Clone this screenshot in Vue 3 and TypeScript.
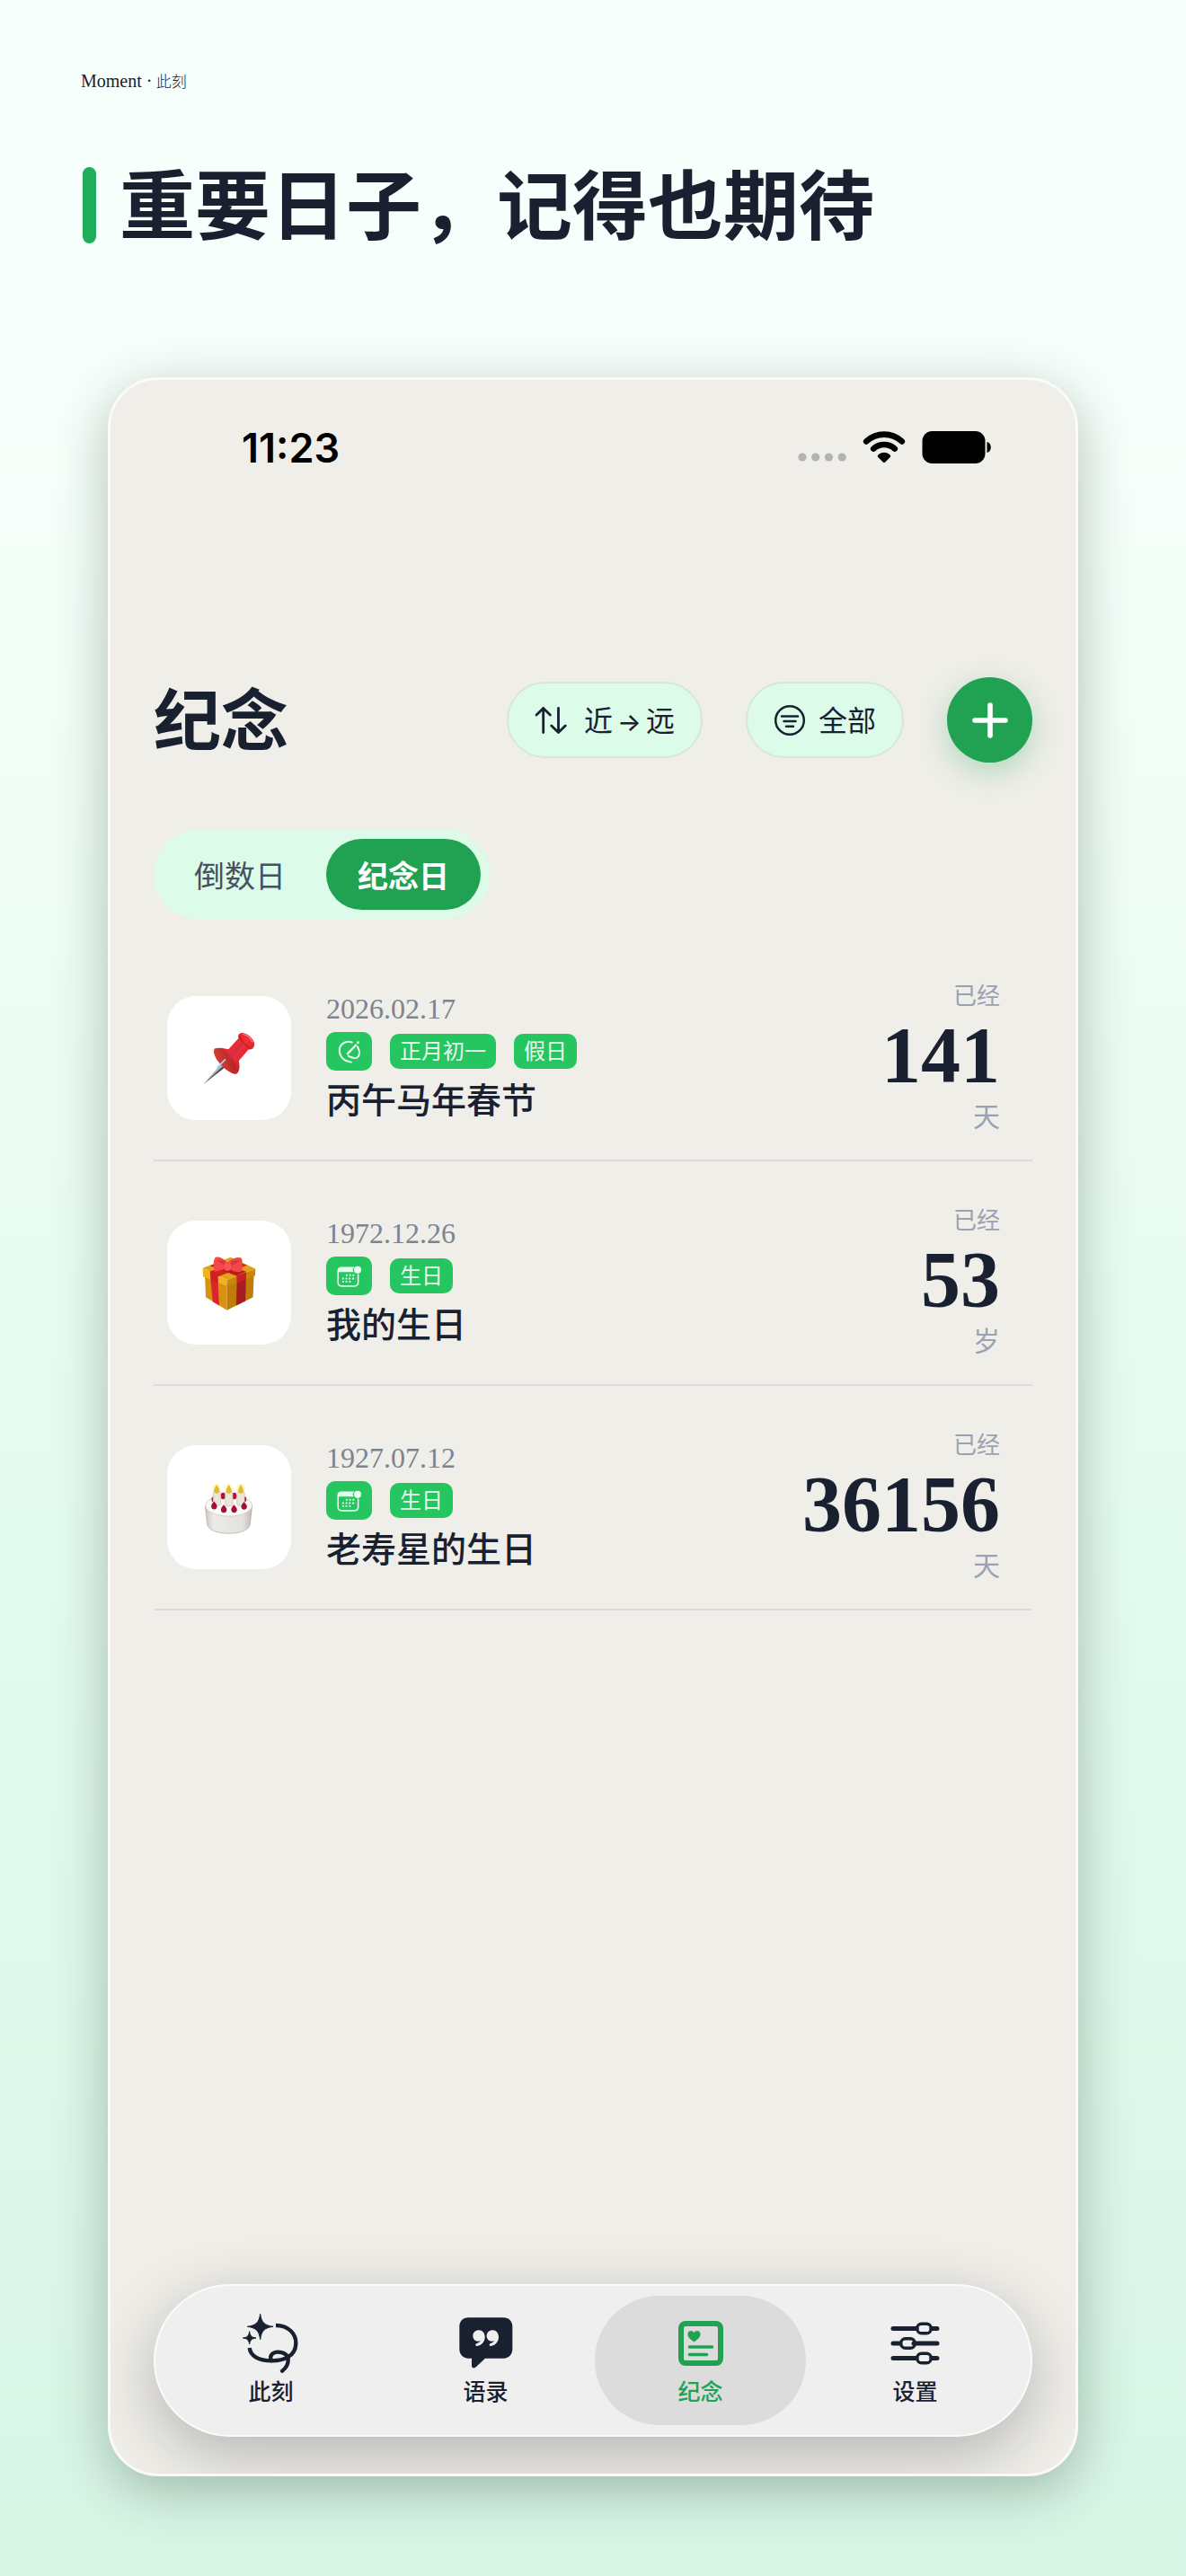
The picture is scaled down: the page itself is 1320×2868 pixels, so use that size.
<script setup lang="ts">
import { ref } from 'vue'

type Kind = 'lunar' | 'solar'
type Emoji = 'pin' | 'gift' | 'cake'
interface Anniversary {
  emoji: Emoji
  date: string
  kind: Kind
  tags: string[]
  title: string
  value: number
  unit: string
}

const items: Anniversary[] = [
  { emoji: 'pin', date: '2026.02.17', kind: 'lunar', tags: ['正月初一', '假日'], title: '丙午马年春节', value: 141, unit: '天' },
  { emoji: 'gift', date: '1972.12.26', kind: 'solar', tags: ['生日'], title: '我的生日', value: 53, unit: '岁' },
  { emoji: 'cake', date: '1927.07.12', kind: 'solar', tags: ['生日'], title: '老寿星的生日', value: 36156, unit: '天' },
]

const segments = ['倒数日', '纪念日']
const activeSegment = ref('纪念日')

const tabs = ['此刻', '语录', '纪念', '设置']
const activeTab = ref('纪念')
</script>

<template>
  <div class="page">
    <header class="intro">
      <p class="brand"><span class="brand-latin">Moment ·</span> 此刻</p>
      <h1 class="headline">重要日子，记得也期待</h1>
    </header>

    <main class="phone">
      <div class="status">
        <span class="time">11:23</span>
        <div class="status-icons">
          <svg class="signal" viewBox="0 0 54 38" aria-hidden="true">
            <g fill="#b3b2ae"><circle cx="5" cy="30" r="4.6" /><circle cx="19.700" cy="30" r="4.6" /><circle cx="34.400" cy="30" r="4.6" /><circle cx="49.200" cy="30" r="4.6" /></g>
          </svg>
          <svg class="wifi" viewBox="0 0 48 38" aria-hidden="true">
            <g fill="none" stroke="#000" stroke-width="6.600" stroke-linecap="round">
              <path d="M4.200 12.400a29 29 0 0 1 39.600 0" />
              <path d="M12.200 20.600a17.500 17.500 0 0 1 23.600 0" />
            </g>
            <path d="M17.400 27.400c3.600-3.600 9.600-3.600 13.200 0 .9.900.9 1.700.1 2.500l-5.500 5.500c-.8.800-1.600.8-2.400 0l-5.500-5.500c-.8-.8-.8-1.600.1-2.500z" />
          </svg>
          <svg class="battery" viewBox="0 0 78 38" aria-hidden="true">
            <rect x="0.500" y="1" width="70" height="36" rx="11" />
            <path d="M72.500 13c2.700.6 4.300 3 4.300 6s-1.600 5.400-4.300 6z" />
          </svg>
        </div>
      </div>

      <div class="toolbar">
        <h2 class="title">纪念</h2>
        <button class="pill" type="button">
          <svg class="sort-icon" viewBox="0 0 36 36" aria-hidden="true">
            <g fill="none" stroke="#192130" stroke-width="2.800" stroke-linecap="round" stroke-linejoin="round">
              <path d="M9.700 31.500V4.500M2 12l7.700-7.500L17.400 12" />
              <path d="M26.500 4.500v27M18.800 24l7.700 7.500 7.700-7.500" />
            </g>
          </svg>
          <span class="pill-text">近<span class="arrow">→</span>远</span>
        </button>
        <button class="pill pill-filter" type="button">
          <svg class="filter-icon" viewBox="0 0 36 36" aria-hidden="true">
            <g fill="none" stroke="#192130" stroke-width="2.500" stroke-linecap="round">
              <circle cx="18" cy="18" r="15.800" />
              <path d="M9 13.500h18M11.500 19h13M14 24.700h8" />
            </g>
          </svg>
          <span class="pill-text">全部</span>
        </button>
        <button class="add" type="button" aria-label="添加">
          <svg viewBox="0 0 40 40" aria-hidden="true">
            <path d="M20 3v34M3 20h34" stroke="#fff" stroke-width="5.600" stroke-linecap="round" />
          </svg>
        </button>
      </div>

      <div class="segmented">
        <button
          v-for="name in segments"
          :key="name"
          type="button"
          :class="['segment', { active: name === activeSegment }]"
          @click="activeSegment = name"
        >{{ name }}</button>
      </div>

      <ul class="list">
        <li v-for="item in items" :key="item.title" class="row">
          <div class="tile">
            <svg v-if="item.emoji === 'pin'" class="emoji" viewBox="193 259 190 190" aria-hidden="true">
              <defs>
                <linearGradient id="pinRed" x1="0" y1="0" x2="1" y2="1"><stop offset="0" stop-color="#c9141c" /><stop offset="0.500" stop-color="#f0303a" /><stop offset="1" stop-color="#b50f18" /></linearGradient>
                <linearGradient id="pinDish" x1="0" y1="0" x2="1" y2="1"><stop offset="0" stop-color="#d94a36" /><stop offset="1" stop-color="#9d1f1f" /></linearGradient>
              </defs>
              <path d="M203 441l62-72 12 10z" fill="#9fb9c9" />
              <path d="M203 441l70-65 6 5z" fill="#4a3f3f" />
              <path d="M240 323c12-5 30-2 46 2l33-36c-4-11 3-19 14-18 17 2 34 17 38 33 2 14-5 23-19 22l-32 37c4 19 3 34-7 43-10 4-32-9-49-27-18-18-31-42-24-56z" fill="url(#pinRed)" />
              <ellipse cx="275" cy="360" rx="21" ry="49" transform="rotate(-43 275 360)" fill="url(#pinDish)" opacity="0.800" />
              <path d="M288 345l40-43 9 7-38 43c-8 8-18 0-11-7z" fill="#c2304a" opacity="0.700" />
              <path d="M322 281c5 14 19 31 35 40" fill="none" stroke="#b5121c" stroke-width="3" />
              <path d="M334 275c14 3 25 12 30 25" fill="none" stroke="#ff7a7c" stroke-width="4" stroke-linecap="round" />
              <path d="M248 386l28-28" stroke="#a9d4ee" stroke-width="5" />
            </svg>
            <svg v-else-if="item.emoji === 'gift'" class="emoji" viewBox="193 229 190 190" aria-hidden="true">
              <path d="M208 300l73 28v87l-70-43z" fill="#d9920f" />
              <path d="M281 328l89-30-3 74-86 43z" fill="#c07c08" />
              <path d="M226 307l25 10 4 83-21-13z" fill="#d9262b" />
              <path d="M314 316l30-11-2 80-31 15z" fill="#a81c1f" />
              <path d="M201 276l92-36 82 38-94 37z" fill="#e3a01a" />
              <path d="M201 276l80 39v21l-79-31z" fill="#f0b31c" />
              <path d="M281 315l94-37-1 23-93 35z" fill="#cb870b" />
              <path d="M225 286l26 14 1 26-25-10zM313 302l32-13-1 24-31 12z" fill="#c91f25" />
              <path d="M225 287l88-34 34 14-95 37z" fill="#d3211f" />
              <path d="M257 256l87 32-31 14-88-34z" fill="#b81d1d" />
              <path d="M282 258c-16-18-35-22-41-15-6 12-5 30-2 45 17-3 32-6 43-15 12 12 28 18 47 15 4-16 4-34 0-45-9-6-31-1-47 15z" fill="#f2474b" />
              <path d="M282 258c-12-8-25-10-34-8 10 9 20 14 29 19zM286 260c12-8 26-11 38-10-10 10-22 14-33 20z" fill="#c9262c" opacity="0.600" />
              <rect x="272" y="256" width="22" height="29" rx="9" fill="#f5555a" />
            </svg>
            <svg v-else class="emoji" viewBox="193 982 190 190" aria-hidden="true">
              <defs>
                <linearGradient id="cakeSide" x1="0" x2="1" y1="0" y2="0"><stop offset="0" stop-color="#c9c6c1" /><stop offset="0.180" stop-color="#ecebe8" /><stop offset="0.800" stop-color="#e4e2df" /><stop offset="1" stop-color="#bdb9b4" /></linearGradient>
              </defs>
              <g fill="#fff3a8" opacity="0.600"><circle cx="247" cy="1014" r="15" /><circle cx="287" cy="1014" r="15" /><circle cx="327" cy="1014" r="15" /></g>
              <path d="M209 1073l7 62c4 19 36 29 71 29s66-10 70-29l7-62z" fill="url(#cakeSide)" stroke="#aaa7a3" stroke-width="2" />
              <ellipse cx="287" cy="1072" rx="77" ry="35" fill="#f8f8f6" stroke="#c4c1bd" stroke-width="2" />
              <g fill="#b5123a"><ellipse cx="268" cy="1040" rx="8" ry="11" /><ellipse cx="305" cy="1040" rx="8" ry="11" /><ellipse cx="236" cy="1051" rx="6" ry="9" /><ellipse cx="339" cy="1051" rx="6" ry="9" /></g>
              <g fill="#e9e5d8" stroke="#bbb6a6" stroke-width="1.500"><rect x="235" y="1024" width="25" height="48" rx="7" /><rect x="275" y="1024" width="25" height="50" rx="7" /><rect x="314" y="1024" width="25" height="48" rx="7" /></g>
              <g fill="#e7bd20" stroke="#c3961a" stroke-width="1"><path d="M247 1004c4 8 8 12 8 18s-4 9-8 9-8-3-8-9 4-10 8-18z" /><path d="M287 1004c4 8 8 12 8 18s-4 9-8 9-8-3-8-9 4-10 8-18z" /><path d="M327 1004c4 8 8 12 8 18s-4 9-8 9-8-3-8-9 4-10 8-18z" /></g>
              <g fill="#a50d34"><path d="M238 1058c5 7 10 10 10 16 0 14-19 14-19 0 0-6 5-9 9-16z" /><path d="M270 1069c5 7 10 10 10 16 0 14-19 14-19 0 0-6 5-9 9-16z" /><path d="M304 1069c5 7 10 10 10 16 0 14-19 14-19 0 0-6 5-9 9-16z" /><path d="M337 1059c5 7 10 10 10 16 0 14-19 14-19 0 0-6 5-9 9-16z" /></g>
            </svg>
          </div>

          <div class="info">
            <time class="date">{{ item.date }}</time>
            <div class="tags">
              <span class="badge">
                <svg v-if="item.kind === 'lunar'" viewBox="645 290 84 90" aria-hidden="true">
                  <g fill="none" stroke="#e9fbef" stroke-width="6.500" stroke-linecap="round">
                    <path d="M696 301c-24-8-46 8-45 31 1 22 18 38 42 40" />
                    <path d="M716 317c10 17 8 36-5 40-11 3-19-2-28-7" />
                    <path d="M680 342l30-31" stroke-width="7.500" />
                    <path d="M717.500 302v.1" stroke-width="9" />
                  </g>
                </svg>
                <svg v-else viewBox="648 264 90 80" aria-hidden="true">
                  <path d="M707 273h-44c-6 0-11 5-11 11v42c0 8 5 13 13 13h46c9 0 13-5 13-13v-28" fill="none" stroke="#e9fbef" stroke-width="5" stroke-linecap="round" />
                  <path d="M652 289v-8c0-6 4-9 9-9h44c-1 7 0 12 3 17z" fill="#e9fbef" />
                  <circle cx="722" cy="281" r="13" fill="#e9fbef" />
                  <path d="M680 300h36M667 312h49M667 323h35" stroke="#e9fbef" stroke-width="6" stroke-dasharray="6 6" />
                </svg>
              </span>
              <span v-for="tag in item.tags" :key="tag" class="tag">{{ tag }}</span>
            </div>
            <h3 class="name">{{ item.title }}</h3>
          </div>

          <div class="count">
            <span class="since">已经</span>
            <strong class="value">{{ item.value }}</strong>
            <span class="unit">{{ item.unit }}</span>
          </div>
        </li>
      </ul>

      <nav class="tabbar">
        <button
          v-for="tab in tabs"
          :key="tab"
          type="button"
          :class="['tab', { active: tab === activeTab }]"
          @click="activeTab = tab"
        >
          <svg v-if="tab === '此刻'" viewBox="350 168 210 210" aria-hidden="true">
            <path d="M418 175c4 28 14 38 43 42-29 4-39 14-43 43-4-29-14-39-43-43 29-4 39-14 43-42zM382 233c2 15 7 20 22 22-15 2-20 7-22 21-2-14-7-19-22-21 15-2 20-7 22-22z" fill="currentColor" stroke="currentColor" stroke-width="3" stroke-linejoin="round" />
            <g fill="none" stroke="currentColor" stroke-width="13">
              <path d="M470 213c42 0 68 28 67 61-1 42-42 58-82 57-42 0-70-16-73-43" />
              <path d="M455 330c-8-15 4-28 22-28 20 0 34 11 34 25 1 17-8 29-20 38" stroke-linecap="round" />
            </g>
          </svg>
          <svg v-else-if="tab === '语录'" viewBox="1069 164 210 210" aria-hidden="true">
            <path d="M1115 183h117c18 0 30 12 30 30v75c0 18-12 31-30 31h-61l-30 28c-7 7-15 5-15-4v-24h-11c-18 0-30-13-30-31v-75c0-18 12-30 30-30z" fill="currentColor" />
            <path d="M1150 225c12 0 20 10 20 23 0 16-12 28-26 30-7 0-6-7-1-9 6-2 10-4 12-8-15 4-25-5-25-17 0-11 9-19 20-19zM1196 225c12 0 20 10 20 23 0 16-12 28-26 30-7 0-6-7-1-9 6-2 10-4 12-8-15 4-25-5-25-17 0-11 9-19 20-19z" fill="#efeff0" />
          </svg>
          <svg v-else-if="tab === '纪念'" viewBox="0 0 70 70" aria-hidden="true">
            <rect x="13" y="13" width="44" height="44" rx="5" fill="none" stroke="currentColor" stroke-width="6" />
            <path d="M27.500 33.500c-5-3.500-7-5.500-7-8.700 0-4.200 5-5 7-1.700 2-3.300 7-2.500 7 1.700 0 3.200-2 5.200-7 8.700z" fill="currentColor" />
            <path d="M22.500 39h25M22.500 47.500h19" stroke="currentColor" stroke-width="3.600" stroke-linecap="round" />
          </svg>
          <svg v-else viewBox="0 0 70 70" aria-hidden="true">
            <path d="M10 18.500h26M53 18.500h6M10 35h7M33 35h26M10 51.500h26M53 51.500h6" stroke="currentColor" stroke-width="5" stroke-linecap="round" />
            <g fill="none" stroke="currentColor" stroke-width="3.400"><rect x="36.800" y="13.200" width="15.400" height="10.600" rx="4.800" /><rect x="18.800" y="29.700" width="15.400" height="10.600" rx="4.800" /><rect x="36.800" y="46.200" width="15.400" height="10.600" rx="4.800" /></g>
          </svg>
          <span>{{ tab }}</span>
        </button>
      </nav>
    </main>
  </div>
</template>

<style>
body {
  margin: 0;
}
</style>

<style scoped>
.page {
  box-sizing: border-box;
  display: flex;
  flex-direction: column;
  min-height: 100vh;
  padding-bottom: 111px;
  background: linear-gradient(180deg, #f6fffb 0%, #f7fffb 16%, #e4fbef 60%, #d8f5e6 100%);
  color: #192130;
  font-family: "Noto Sans CJK SC", sans-serif;
}

.page * {
  box-sizing: border-box;
}

h1, h2, h3, p, ul {
  margin: 0;
  padding: 0;
}

button {
  border: 0;
  padding: 0;
  background: none;
  color: inherit;
  font-family: inherit;
  cursor: pointer;
}

svg {
  display: block;
  flex: none;
}

.intro {
  padding: 78px 90px 0;
}

.brand {
  height: 24px;
  font-size: 17px;
  line-height: 24px;
  font-family: "Liberation Serif", "Noto Sans CJK SC", serif;
  font-weight: 300;
}

.brand-latin {
  font-size: 20px;
}

.headline {
  display: flex;
  align-items: flex-start;
  gap: 26px;
  margin: 84px 0 0 2px;
  font-size: 84px;
  line-height: 76px;
  font-weight: 700;
}

.headline::before {
  content: "";
  width: 15px;
  height: 85px;
  border-radius: 8px;
  background: #21ae5c;
}

.phone {
  display: flex;
  flex: 1;
  flex-direction: column;
  margin: 149px 120px 0;
  padding: 0 48px 41px;
  overflow: hidden;
  border: 3px solid #fbfaf8;
  border-radius: 56px;
  background: #efeee9;
  box-shadow: 0 16px 60px rgba(20, 45, 25, 0.3);
}

.status {
  display: flex;
  align-items: center;
  justify-content: space-between;
  height: 150px;
  padding: 0 45px 0 98px;
}

.time {
  color: #000;
  font-family: Inter, sans-serif;
  font-size: 45px;
  font-weight: 600;
}

.status-icons {
  display: flex;
  gap: 18px;
}

.signal {
  width: 54px;
  height: 38px;
}

.wifi {
  width: 48px;
  height: 38px;
}

.battery {
  width: 78px;
  height: 38px;
}

.toolbar {
  display: flex;
  align-items: center;
  gap: 48px;
  margin-top: 181px;
}

.title {
  flex: 1;
  padding-bottom: 8px;
  font-size: 75px;
  line-height: 87px;
  font-weight: 700;
}

.pill {
  display: flex;
  align-items: center;
  gap: 19px;
  height: 85px;
  padding: 0 29px;
  border: 2px solid #d7e6da;
  border-radius: 43px;
  background: #dcfce9;
  font-size: 32px;
}

.pill-filter {
  gap: 14px;
}

.pill-text {
  padding-bottom: 4px;
}

.arrow {
  display: inline-block;
  width: 37px;
  font-family: Inter, sans-serif;
  font-size: 28px;
  font-weight: 500;
  text-align: center;
}

.sort-icon,
.filter-icon {
  width: 36px;
  height: 36px;
}

.add {
  display: grid;
  place-items: center;
  width: 95px;
  height: 95px;
  border-radius: 50%;
  background: #21a152;
  box-shadow: 0 10px 32px rgba(33, 161, 82, 0.3);
}

.add svg {
  width: 40px;
  height: 40px;
}

.segmented {
  display: flex;
  align-self: flex-start;
  gap: 10px;
  margin-top: 75px;
  padding: 10px;
  border-radius: 50px;
  background: #dcfce9;
}

.segment {
  height: 79px;
  padding: 0 35px;
  border-radius: 40px;
  color: #465061;
  font-size: 34px;
}

.segment.active {
  background: #21a152;
  color: #fff;
  font-weight: 700;
}

.list {
  margin-top: 20px;
  list-style: none;
}

.row {
  display: flex;
  height: 250px;
  padding: 50px 36px 0 15px;
  border-bottom: 2px solid #dddcd9;
}

.tile {
  display: grid;
  place-items: center;
  flex: none;
  width: 138px;
  height: 138px;
  margin-top: 16px;
  border-radius: 32px;
  background: #fff;
}

.emoji {
  width: 64px;
  height: 64px;
}

.info {
  flex: 1;
  margin: 16px 0 0 39px;
}

.date {
  display: block;
  color: #7b8492;
  font-family: "Liberation Serif", serif;
  font-size: 32px;
  line-height: 28px;
}

.tags {
  display: flex;
  align-items: center;
  gap: 20px;
  margin-top: 12px;
}

.badge {
  display: grid;
  place-items: center;
  width: 51px;
  height: 43px;
  border-radius: 10px;
  background: #25c55f;
}

.badge svg {
  width: 28px;
  height: 28px;
}

.tag {
  padding: 0 11px 3px;
  border-radius: 10px;
  background: #25c55f;
  color: #e9fbef;
  font-size: 24px;
  line-height: 36px;
}

.name {
  margin-top: 6px;
  font-size: 39px;
  line-height: 48px;
  font-weight: 500;
}

.count {
  display: flex;
  flex-direction: column;
  align-items: flex-end;
  color: #9aa2b1;
}

.since {
  font-size: 26px;
  line-height: 28px;
}

.value {
  margin-top: 14px;
  color: #192130;
  font-family: "Liberation Serif", serif;
  font-size: 88px;
  line-height: 80px;
}

.unit {
  margin-top: 6px;
  font-size: 30px;
  line-height: 40px;
}

.tabbar {
  display: flex;
  gap: 4px;
  margin-top: auto;
  padding: 11px;
  border: 2px solid #fcfbfa;
  border-radius: 85px;
  background: #efeff0;
  box-shadow: 0 20px 70px rgba(0, 0, 0, 0.24);
}

.tab {
  display: flex;
  flex: 1;
  flex-direction: column;
  align-items: center;
  height: 144px;
  padding-top: 18px;
  border-radius: 72px;
  font-size: 25px;
  line-height: 34px;
  font-weight: 500;
}

.tab svg {
  width: 70px;
  height: 70px;
}

.tab.active {
  background: #dcdcdc;
  color: #21a152;
}
</style>
